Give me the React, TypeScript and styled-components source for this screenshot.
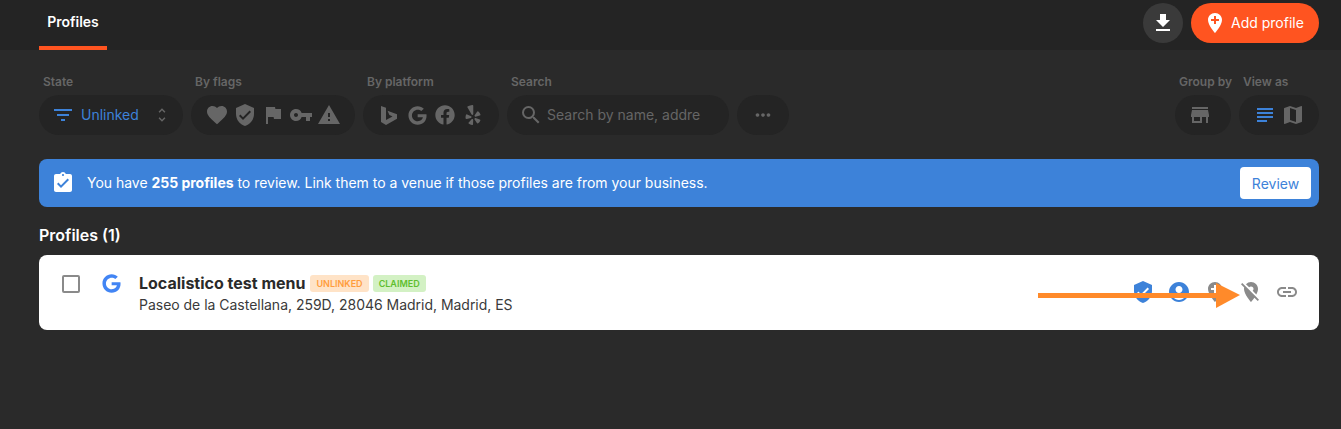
import styled, { createGlobalStyle } from "styled-components";
import {
  MdAccountCircle,
  MdAddLocation,
  MdAssignmentTurnedIn,
  MdFavorite,
  MdFilterList,
  MdFlag,
  MdLink,
  MdLocationOff,
  MdMap,
  MdMoreHoriz,
  MdSearch,
  MdStore,
  MdSubject,
  MdUnfoldMore,
  MdVerifiedUser,
  MdVpnKey,
  MdWarning,
  MdFileDownload,
} from "react-icons/md";
import { FaFacebook, FaGoogle, FaYelp } from "react-icons/fa";

const GlobalStyle = createGlobalStyle`
  html, body {
    margin: 0;
    padding: 0;
    height: 100%;
    background: #2a2a2a;
    font-family: Inter, "Liberation Sans", sans-serif;
  }
`;

const Page = styled.div`
  width: 1341px;
  height: 429px;
  overflow: hidden;
  background: #2a2a2a;
`;

const TopBar = styled.header`
  display: flex;
  align-items: stretch;
  justify-content: space-between;
  height: 50px;
  padding: 0 22px 0 39px;
  box-sizing: border-box;
  background: #242424;
`;

const Tab = styled.div`
  display: flex;
  align-items: flex-start;
  justify-content: center;
  width: 68px;
  padding-top: 14px;
  box-sizing: border-box;
  border-bottom: 4px solid #ff5420;
  color: #fff;
  font-size: 14px;
  font-weight: 600;
  line-height: 16px;
`;

const TopActions = styled.div`
  display: flex;
  align-items: center;
  gap: 8px;
  padding-bottom: 4px;
`;

const RoundButton = styled.button`
  display: flex;
  align-items: center;
  justify-content: center;
  width: 40px;
  height: 40px;
  padding: 0;
  border: none;
  border-radius: 50%;
  background: #3a3a3a;
  color: #fff;
`;

const AddButton = styled.button`
  display: flex;
  align-items: center;
  gap: 4px;
  width: 128px;
  height: 40px;
  padding: 0 0 0 12px;
  box-sizing: border-box;
  border: none;
  border-radius: 20px;
  background: #ff5420;
  color: #fff;
  font-family: inherit;
  font-size: 14px;
  line-height: 18px;
`;

const Filters = styled.div`
  display: flex;
  align-items: flex-end;
  gap: 8px;
  padding: 25px 22px 0 39px;
`;

const FilterGroup = styled.div<{ $width: number }>`
  display: flex;
  flex-direction: column;
  gap: 6px;
  width: ${(p) => p.$width}px;
`;

const FilterLabel = styled.span`
  padding-left: 4px;
  height: 14px;
  color: #666;
  font-size: 12px;
  font-weight: 600;
  line-height: 14px;
  white-space: nowrap;
`;

const Pill = styled.div<{ $gap?: number; $start?: boolean; $shift?: number }>`
  display: flex;
  align-items: center;
  justify-content: ${(p) => (p.$start ? "flex-start" : "center")};
  gap: ${(p) => p.$gap ?? 0}px;
  height: 40px;
  padding: 0 ${(p) => (p.$start ? 12 : 0) + (p.$shift ?? 0)}px 0 ${(p) => (p.$start ? 12 : 0)}px;
  box-sizing: border-box;
  border-radius: 20px;
  background: #242424;
  color: #666;
`;

const IconSlot = styled.span`
  display: flex;
  align-items: center;
  justify-content: center;
  width: 28px;
`;

const StateValue = styled.span`
  flex: 1;
  margin-left: 6px;
  color: #3d82d9;
  font-size: 14px;
  line-height: 18px;
`;

const SearchText = styled.span`
  margin-left: 4px;
  color: #666;
  font-size: 14px;
  line-height: 18px;
  white-space: nowrap;
`;

const Spacer = styled.div`
  flex: 1;
`;

const Banner = styled.div`
  display: flex;
  align-items: center;
  height: 48px;
  margin: 24px 22px 0 39px;
  padding: 0 8px 0 12px;
  box-sizing: border-box;
  border-radius: 8px;
  background: #3d82d9;
  color: #fff;
`;

const BannerText = styled.p`
  flex: 1;
  margin: 0 0 0 12px;
  color: #fff;
  font-size: 14px;
  line-height: 18px;
  letter-spacing: -0.02px;

  strong {
    font-weight: 700;
  }
`;

const ReviewButton = styled.button`
  width: 71px;
  height: 32px;
  padding: 0;
  border: none;
  border-radius: 4px;
  background: #fff;
  color: #3d82d9;
  font-family: inherit;
  font-size: 14px;
`;

const SectionTitle = styled.h2`
  margin: 18px 0 0 39px;
  color: #fff;
  font-size: 16px;
  font-weight: 600;
  line-height: 20px;
`;

const Card = styled.div`
  position: relative;
  display: flex;
  align-items: flex-start;
  height: 75px;
  margin: 10px 22px 0 39px;
  padding: 18px 20px 0 23px;
  box-sizing: border-box;
  border-radius: 8px;
  background: #fff;
`;

const Checkbox = styled.span`
  width: 18px;
  height: 18px;
  margin-top: 2px;
  box-sizing: border-box;
  border: 2px solid #8a8a8a;
  border-radius: 2px;
`;

const GoogleMark = styled.span`
  display: flex;
  width: 20px;
  margin: 1px 0 0 22px;
  color: #4285f4;
`;

const CardBody = styled.div`
  flex: 1;
  margin-left: 17px;
`;

const TitleRow = styled.div`
  display: flex;
  align-items: center;
  gap: 4px;
  height: 20px;
`;

const Name = styled.span`
  margin-right: 1px;
  color: #2a2a2a;
  font-size: 16px;
  font-weight: 700;
  line-height: 20px;
`;

const Tag = styled.span<{ $bg: string; $fg: string }>`
  padding: 0 6px;
  border-radius: 3px;
  background: ${(p) => p.$bg};
  color: ${(p) => p.$fg};
  font-size: 9px;
  font-weight: 600;
  line-height: 17px;
`;

const Address = styled.div`
  margin-top: 2px;
  color: #3a3a3a;
  font-size: 14px;
  line-height: 20px;
  letter-spacing: -0.02px;
`;

const CardActions = styled.div`
  display: flex;
  align-items: center;
  gap: 12px;
  margin-top: 7px;
`;

const CardIcon = styled.span<{ $blue?: boolean }>`
  display: flex;
  color: ${(p) => (p.$blue ? "#3d82d9" : "#8a8a8a")};
`;

const Arrow = styled.svg`
  position: absolute;
  left: 999px;
  top: 27px;
`;

const BingIcon = () => (
  <svg width="16" height="19" viewBox="0 0 16 19" fill="currentColor">
    <path d="M0 0 L5 1.8 V14 L11.5 10.4 L8.4 9 L6.5 4.8 L16 8.2 V12.8 L5 19 L0 16 Z" />
  </svg>
);

export default function App() {
  return (
    <Page>
      <GlobalStyle />
      <TopBar>
        <Tab>Profiles</Tab>
        <TopActions>
          <RoundButton>
            <MdFileDownload size={24} />
          </RoundButton>
          <AddButton>
            <MdAddLocation size={24} />
            Add profile
          </AddButton>
        </TopActions>
      </TopBar>

      <Filters>
        <FilterGroup $width={144}>
          <FilterLabel>State</FilterLabel>
          <Pill $start>
            <MdFilterList size={24} color="#3d82d9" />
            <StateValue>Unlinked</StateValue>
            <MdUnfoldMore size={18} />
          </Pill>
        </FilterGroup>
        <FilterGroup $width={164}>
          <FilterLabel>By flags</FilterLabel>
          <Pill $gap={4}>
            <MdFavorite size={24} />
            <MdVerifiedUser size={24} />
            <MdFlag size={24} />
            <MdVpnKey size={24} />
            <MdWarning size={24} />
          </Pill>
        </FilterGroup>
        <FilterGroup $width={136}>
          <FilterLabel>By platform</FilterLabel>
          <Pill>
            <IconSlot><BingIcon /></IconSlot>
            <IconSlot><FaGoogle size={19} /></IconSlot>
            <IconSlot><FaFacebook size={20} /></IconSlot>
            <IconSlot><FaYelp size={20} /></IconSlot>
          </Pill>
        </FilterGroup>
        <FilterGroup $width={222}>
          <FilterLabel>Search</FilterLabel>
          <Pill $start>
            <MdSearch size={24} />
            <SearchText>Search by name, addre</SearchText>
          </Pill>
        </FilterGroup>
        <FilterGroup $width={52}>
          <Pill>
            <MdMoreHoriz size={22} />
          </Pill>
        </FilterGroup>
        <Spacer />
        <FilterGroup $width={56}>
          <FilterLabel>Group by</FilterLabel>
          <Pill $shift={6}>
            <MdStore size={24} />
          </Pill>
        </FilterGroup>
        <FilterGroup $width={80}>
          <FilterLabel>View as</FilterLabel>
          <Pill $gap={4}>
            <MdSubject size={24} color="#3d82d9" />
            <MdMap size={24} />
          </Pill>
        </FilterGroup>
      </Filters>

      <Banner>
        <MdAssignmentTurnedIn size={24} />
        <BannerText>
          You have <strong>255 profiles</strong> to review. Link them to a venue if those profiles
          are from your business.
        </BannerText>
        <ReviewButton>Review</ReviewButton>
      </Banner>

      <SectionTitle>Profiles (1)</SectionTitle>

      <Card>
        <Checkbox />
        <GoogleMark>
          <FaGoogle size={19} />
        </GoogleMark>
        <CardBody>
          <TitleRow>
            <Name>Localistico test menu</Name>
            <Tag $bg="#ffe3c7" $fg="#ff9d3c">UNLINKED</Tag>
            <Tag $bg="#d3f1c4" $fg="#5fbf2e">CLAIMED</Tag>
          </TitleRow>
          <Address>Paseo de la Castellana, 259D, 28046 Madrid, Madrid, ES</Address>
        </CardBody>
        <CardActions>
          <CardIcon $blue><MdVerifiedUser size={24} /></CardIcon>
          <CardIcon $blue><MdAccountCircle size={24} /></CardIcon>
          <CardIcon><MdAddLocation size={24} /></CardIcon>
          <CardIcon><MdLocationOff size={24} /></CardIcon>
          <CardIcon><MdLink size={24} /></CardIcon>
        </CardActions>
        <Arrow width="204" height="26" viewBox="0 0 204 26">
          <rect x="0" y="11" width="180" height="5" fill="#ff8a2a" />
          <polygon points="178,1 202,13 178,26" fill="#ff8a2a" />
        </Arrow>
      </Card>
    </Page>
  );
}
